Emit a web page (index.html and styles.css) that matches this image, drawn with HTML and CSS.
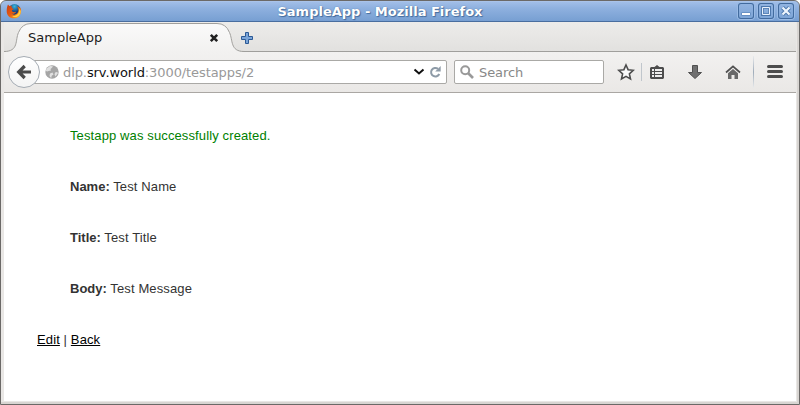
FILE: index.html
```html
<!DOCTYPE html>
<html lang="en">
<head>
<meta charset="utf-8">
<title>SampleApp</title>
<link rel="stylesheet" href="styles.css">
</head>
<body>
<div class="window">
  <header class="titlebar">
    <svg class="firefox" width="16" height="16" viewBox="0 0 16 16">
      <defs>
        <linearGradient id="fox" x1="0" y1="0" x2="1" y2="1"><stop offset="0" stop-color="#c83a12"/><stop offset=".5" stop-color="#e65c10"/><stop offset="1" stop-color="#ffc52e"/></linearGradient>
        <radialGradient id="globe" cx=".5" cy=".2"><stop offset="0" stop-color="#36b5dc"/><stop offset="1" stop-color="#163a78"/></radialGradient>
      </defs>
      <circle cx="8.5" cy="7" r="6" fill="url(#globe)"/>
      <path d="M2 1.500 3.300 3l2.200-.2L5.800 5l2 1-2 1.200c.2 2 2.300 2.500 4.200 1.500-.6 2-3 2.600-4.600 1.800 2.800 2.600 6.800.4 7-3 .1-1.800-.5-3-1.500-4 2.200.3 3.200 1.400 3.600 2.800l-.3-2.500C16.500 8 14.600 15.200 8 15.300 3.500 15.300.6 12 .7 8 .7 5 1.300 3.300 2 1.500Z" fill="url(#fox)"/>
      <path d="M13 5c1 5-2 8.700-7 8.200 3.800 2.400 8.700-.4 8.700-5.200Z" fill="#ffd143"/>
    </svg>
    <h1 class="caption">SampleApp - Mozilla Firefox</h1>
    <div class="controls">
      <span class="control"><svg width="16" height="16"><path class="mark-edge" d="M3.500 9.500h9v3h-9z"/><path class="mark" d="M4 10h8v2H4z"/></svg></span>
      <span class="control"><svg width="16" height="16"><path class="frame-edge" d="M4.500 4.500h7v7h-7z"/><path class="frame" d="M4.500 4.500h7v7h-7z"/><path class="frame-core" d="M5.500 5.500h5v5h-5z"/></svg></span>
      <span class="control"><svg width="16" height="16"><path class="cross-edge" d="m4.500 4.500 7 7m0-7-7 7"/><path class="cross" d="m4.500 4.500 7 7m0-7-7 7"/></svg></span>
    </div>
  </header>
  <div class="tabs">
    <div class="tab">
      <svg class="tab-shape" width="240" height="30" viewBox="0 0 240 30">
        <defs><linearGradient id="tabfill" x1="0" y1="0" x2="0" y2="1"><stop offset="0" stop-color="#fafafa"/><stop offset="1" stop-color="#f2f1f0"/></linearGradient></defs>
        <path d="M0 29.500C15 29.500 11 18 14.500 10.500Q18 1.500 27 1.500H213Q222 1.500 225.500 10.500C229 18 226 29.500 240 29.500V30H0Z" fill="url(#tabfill)"/>
        <path d="M0 29.500C15 29.500 11 18 14.500 10.500Q18 1.500 27 1.500H213Q222 1.500 225.500 10.500C229 18 226 29.500 240 29.500" fill="none" stroke="#a09f9c"/>
      </svg>
      <span class="tab-label">SampleApp</span>
      <svg class="tab-close" width="10" height="10" viewBox="0 0 10 10"><path d="m1.800 1.800 6.400 6.400m0-6.400L1.800 8.200" stroke="#222" stroke-width="2.600"/></svg>
    </div>
    <svg class="new-tab" width="12" height="12" viewBox="0 0 12 12"><path d="M4.500.5h3v4h4v3h-4v4h-3v-4h-4v-3h4z" fill="#7ba5d8" stroke="#2c5a96" stroke-linejoin="round"/></svg>
  </div>
  <nav class="toolbar">
    <span class="back"><svg width="16" height="16" viewBox="0 0 16 16"><path d="M8.700 2 2.700 8l6 6M3.500 8H15" fill="none" stroke="#4b4b4b" stroke-width="3.200"/></svg></span>
    <div class="address">
      <svg class="site" width="14" height="14" viewBox="0 0 14 14"><circle cx="7" cy="7" r="6.700" fill="#a5a5a5"/><path d="M1.500 3.500 5 1l3 .2-1 1.500L5.500 4 6 5.500 3.500 6 2.300 6.500.9 6ZM5 8.500l2.500-1 1 2-1.800 1.200-.5 2.500L4.500 11ZM10 7.500l2-.5 1 1-2.500 3.500L9.500 9.500Z" fill="#e0e0e0"/></svg>
      <span class="url">dlp.<b>srv.world</b>:3000/testapps/2</span>
      <svg class="dropmark" width="12" height="8" viewBox="0 0 12 8"><path d="m1.500 1.500 4.500 4 4.500-4" fill="none" stroke="#111" stroke-width="2"/></svg>
      <svg class="reload" width="12" height="12" viewBox="0 0 12 12"><path d="M9 2.800A4.300 4.300 0 1 0 10.300 8" fill="none" stroke="#8e9ba7" stroke-width="2"/><path d="M11.700 0v5.500H6.200Z" fill="#8e9ba7"/></svg>
    </div>
    <div class="search">
      <svg width="14" height="14" viewBox="0 0 14 14"><circle cx="5.200" cy="5.200" r="4" fill="none" stroke="#999" stroke-width="2"/><path d="m8 8 5 5" stroke="#999" stroke-width="2.600"/></svg>
      <span>Search</span>
    </div>
    <svg class="star" width="18" height="18" viewBox="0 0 18 18"><path d="m9 2 2.100 4.700 5.200.6-3.900 3.500 1.100 5.200L9 13.400 4.500 16l1.100-5.200-3.900-3.500 5.200-.6Z" fill="#fafafa" stroke="#4d4d4d" stroke-width="1.600"/></svg>
    <span class="rule rule-short"></span>
    <svg class="list" width="14" height="14" viewBox="0 0 14 14"><path d="M1 2h3.500L7 0l2.500 2H13l1 1v10l-1 1H1l-1-1V3Z" fill="#4d4d4d"/><path d="M2 4h2v2H2zm3 0h7v2H5zM2 7h2v2H2zm3 0h7v2H5zm-3 3h2v2H2zm3 0h7v2H5z" fill="#eee"/></svg>
    <svg class="download" width="14" height="14" viewBox="0 0 14 14"><path d="M4.500.5h5v7h4L7 13.500.5 7.500h4Z" fill="#707070" stroke="#505050"/></svg>
    <svg class="home" width="16" height="14" viewBox="0 0 16 14"><path d="M3 8.300 8 4l5 4.300V14H9.500v-4h-3v4H3Z" fill="#686868"/><path d="M1 7.500 8 1.300l7 6.200" fill="none" stroke="#505050" stroke-width="1.700"/></svg>
    <span class="rule rule-tall"></span>
    <svg class="menu" width="16" height="13" viewBox="0 0 16 13"><path d="M1.500 1.500h13M1.500 6.500h13M1.500 11.500h13" stroke="#4d4d4d" stroke-width="3" stroke-linecap="round"/></svg>
  </nav>
  <main class="page">
    <p class="notice">Testapp was successfully created.</p>
    <p><strong>Name:</strong> Test Name</p>
    <p><strong>Title:</strong> Test Title</p>
    <p><strong>Body:</strong> Test Message</p>
    <div class="links"><a href="#">Edit</a> | <a href="#">Back</a></div>
  </main>
</div>
</body>
</html>
```

FILE: styles.css
```css
* { box-sizing: border-box; }
body { margin: 0; background: #fff; overflow: hidden; }
svg { display: block; flex: none; }

.window {
  display: flex;
  flex-direction: column;
  width: 800px;
  height: 405px;
  border: 1px solid #6b6967;
  border-radius: 6px 6px 0 0;
  background: #e9e7e5;
  box-shadow: inset -2px -2px 0 #d8d5d2;
  overflow: hidden;
  font-family: "DejaVu Sans", sans-serif;
}

.titlebar {
  display: flex;
  align-items: center;
  flex: none;
  height: 22px;
  margin: -1px -1px 0;
  padding: 0 6px;
  border: 1px solid #4a6e9f;
  border-top-color: #3c557c;
  border-radius: 6px 6px 0 0;
  background: linear-gradient(#a4c0e9, #8fb1df 35%, #779fd2);
  box-shadow: inset 0 1px #a9c3e9;
}
.firefox { margin-left: -1px; }
.caption {
  flex: 1;
  margin: 0;
  padding-top: 2px;
  color: #fff;
  font-size: 13px;
  line-height: 20px;
  text-align: center;
  text-shadow: 0 0 1px #3d6595, 1px 1px 1px #456d9f;
}
.controls { display: flex; gap: 4px; margin-right: -1px; }
.control {
  width: 16px;
  height: 16px;
  border-radius: 3px;
  background: linear-gradient(#92b4e1, #7ca4d6);
  box-shadow: inset 0 0 0 1px #426b9e, 0 0 0 1px #9abbe5;
}
.mark { fill: #fff; }
.mark-edge { fill: #4d78ad; }
.frame, .frame-edge, .frame-core, .cross, .cross-edge { fill: none; }
.frame-edge { stroke: #4d78ad; stroke-width: 3; }
.frame { stroke: #e8f1fc; }
.frame-core { stroke: #5f87b9; }
.cross-edge { stroke: #4d78ad; stroke-width: 4; }
.cross { stroke: #eef5fd; stroke-width: 2.2; }

.tabs {
  display: flex;
  align-items: center;
  flex: none;
  height: 30px;
  margin: 0 3px;
  border-bottom: 1px solid #a09f9c;
  background: linear-gradient(#edecea, #e2e1df);
}
.tab {
  position: relative;
  display: flex;
  align-items: center;
  width: 240px;
  height: 30px;
  margin-bottom: -1px;
  padding-left: 24px;
}
.tab-shape { position: absolute; left: 0; top: 0; }
.tab-label {
  position: relative;
  width: 181px;
  padding-top: 2px;
  color: #1c1c1c;
  font-size: 13px;
  line-height: 20px;
}
.tab-close { position: relative; margin-top: 2px; }
.new-tab { margin: 2px 0 0 -3px; }

.toolbar {
  display: flex;
  align-items: center;
  flex: none;
  height: 41px;
  margin: 0 3px;
  padding-left: 4px;
  border-bottom: 1px solid #aaa7a3;
  background: linear-gradient(#f2f1f0, #eae8e6);
}
.back {
  position: relative;
  z-index: 1;
  display: flex;
  align-items: center;
  justify-content: center;
  width: 32px;
  height: 32px;
  border: 1px solid #a5acb4;
  border-radius: 50%;
  background: linear-gradient(#fff, #f4f4f4);
}
.address, .search {
  display: flex;
  align-items: center;
  height: 24px;
  border: 1px solid #aaa9a6;
  border-radius: 2px;
  background: #fff;
  font-size: 13px;
  letter-spacing: -0.09px;
}
.address { width: 415px; margin-left: -8px; padding: 0 5px 0 12px; }
.url { flex: 1; margin-left: 4px; color: #999; }
.url b { color: #111; font-weight: normal; }
.dropmark { margin-right: 4px; }
.search { width: 150px; gap: 5px; margin-left: 7px; padding-left: 5px; color: #888; }
.star { margin-left: 13px; }
.rule { width: 1px; background: #c0c6cc; }
.rule-short { height: 18px; margin-left: 6px; }
.list { margin: 0 0 0 8px; }
.download { margin-left: 24px; }
.home { margin-left: 23px; }
.rule-tall { height: 32px; margin-left: 12px; background: linear-gradient(#e8eaec, #9facba 50%, #e8eaec); }
.menu { margin: -1px 0 0 13px; }

.page {
  flex: 1;
  margin: 0 3px 3px;
  padding: 34px 33px;
  background: #fff;
  color: #333;
  font: 13px/18px "Liberation Sans", Arial, sans-serif;
  letter-spacing: 0.12px;
}
.page p { margin: 0 33px 33px; }
.page strong { letter-spacing: 0; }
.page .notice { color: green; }
.page a { color: #000; }
```
